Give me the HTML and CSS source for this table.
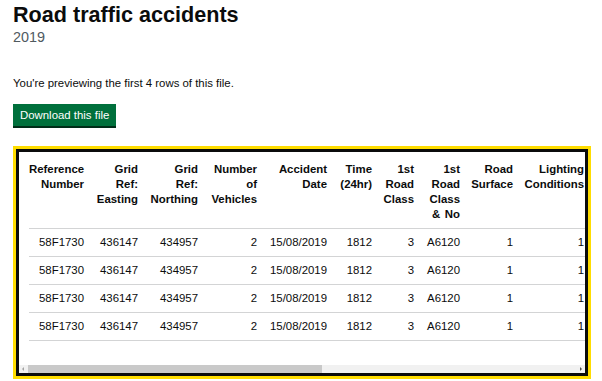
FILE: index.html
```html
<!DOCTYPE html>
<html lang="en">
<head>
<meta charset="utf-8">
<title>Road traffic accidents</title>
<link rel="stylesheet" href="styles.css">
</head>
<body>
<main class="page">
  <h1 class="title">Road traffic accidents</h1>
  <p class="caption">2019</p>
  <p class="lead">You're previewing the first 4 rows of this file.</p>
  <div class="actions"><a class="button" href="#">Download this file</a></div>
  <div class="preview">
    <div class="preview-inner">
      <div class="preview-scroll">
        <table class="data">
          <colgroup>
            <col class="c1"><col class="c2"><col class="c3"><col class="c4"><col class="c5">
            <col class="c6"><col class="c7"><col class="c8"><col class="c9"><col class="c10">
          </colgroup>
          <thead>
            <tr>
              <th>Reference Number</th>
              <th>Grid Ref: Easting</th>
              <th>Grid Ref: Northing</th>
              <th>Number of Vehicles</th>
              <th>Accident Date</th>
              <th>Time (24hr)</th>
              <th>1st Road Class</th>
              <th>1st Road Class &amp; No</th>
              <th>Road Surface</th>
              <th>Lighting Conditions</th>
            </tr>
          </thead>
          <tbody>
            <tr><td>58F1730</td><td>436147</td><td>434957</td><td>2</td><td>15/08/2019</td><td>1812</td><td>3</td><td>A6120</td><td>1</td><td>1</td></tr>
            <tr><td>58F1730</td><td>436147</td><td>434957</td><td>2</td><td>15/08/2019</td><td>1812</td><td>3</td><td>A6120</td><td>1</td><td>1</td></tr>
            <tr><td>58F1730</td><td>436147</td><td>434957</td><td>2</td><td>15/08/2019</td><td>1812</td><td>3</td><td>A6120</td><td>1</td><td>1</td></tr>
            <tr><td>58F1730</td><td>436147</td><td>434957</td><td>2</td><td>15/08/2019</td><td>1812</td><td>3</td><td>A6120</td><td>1</td><td>1</td></tr>
          </tbody>
        </table>
      </div>
      <div class="scrollbar" aria-hidden="true">
        <span class="sb-btn"><svg width="9" height="8" viewBox="0 0 9 8"><polygon points="5,2 5,6 3,4" fill="#a3a3a3"/></svg></span>
        <span class="sb-thumb"></span>
        <span class="sb-space"></span>
        <span class="sb-btn"><svg width="9" height="8" viewBox="0 0 9 8"><polygon points="4,2 4,6 6,4" fill="#505050"/></svg></span>
      </div>
    </div>
  </div>
</main>
</body>
</html>
```

FILE: styles.css
```css
html, body {
  margin: 0;
  padding: 0;
  background: #ffffff;
}

body {
  font-family: "Liberation Sans", Arial, sans-serif;
  color: #0b0c0c;
}

.page {
  padding: 2px 11px 0 13px;
}

.title {
  margin: 0;
  font-size: 21.6px;
  line-height: 26px;
  font-weight: 700;
}

.caption {
  margin: 0;
  font-size: 14.4px;
  line-height: 18px;
  color: #505a5f;
}

.lead {
  margin: 30px 0 0;
  font-size: 11.4px;
  line-height: 15px;
}

.actions {
  display: flex;
  margin-top: 13px;
}

.button {
  display: block;
  padding: 4px 7px 3px;
  font-size: 11.4px;
  line-height: 15px;
  color: #ffffff;
  background: #00703c;
  text-decoration: none;
  box-shadow: 0 2px 0 #002d18;
}

.preview {
  margin-top: 20px;
  border: 3px solid #ffdd00;
}

.preview-inner {
  border: 3px solid #0b0c0c;
  background: #ffffff;
}

.preview-scroll {
  overflow: hidden;
  padding: 4px 0 24px 10px;
}

.data {
  border-collapse: collapse;
  table-layout: fixed;
  width: 566px;
  font-size: 11.4px;
  line-height: 15px;
}

.c1 { width: 66px; }
.c2 { width: 54px; }
.c3 { width: 60px; }
.c4 { width: 59px; }
.c5 { width: 70px; }
.c6 { width: 45px; }
.c7 { width: 42px; }
.c8 { width: 46px; }
.c9 { width: 53px; }
.c10 { width: 71px; }

.data th,
.data td {
  padding: 6px 11px 6px 0;
  text-align: right;
  vertical-align: top;
  border-bottom: 1px solid #d3d4d5;
}

.data th {
  font-weight: 700;
  word-spacing: 1.5px;
}

.data td {
  font-weight: 400;
}

.scrollbar {
  display: flex;
  height: 8px;
  background: #f1f1f1;
}

.sb-btn {
  display: block;
  width: 9px;
  height: 8px;
  flex: none;
}

.sb-btn svg {
  display: block;
}

.sb-thumb {
  display: block;
  width: 294px;
  height: 8px;
  background: #c9c9c9;
  flex: none;
}

.sb-space {
  flex: 1;
}
```
